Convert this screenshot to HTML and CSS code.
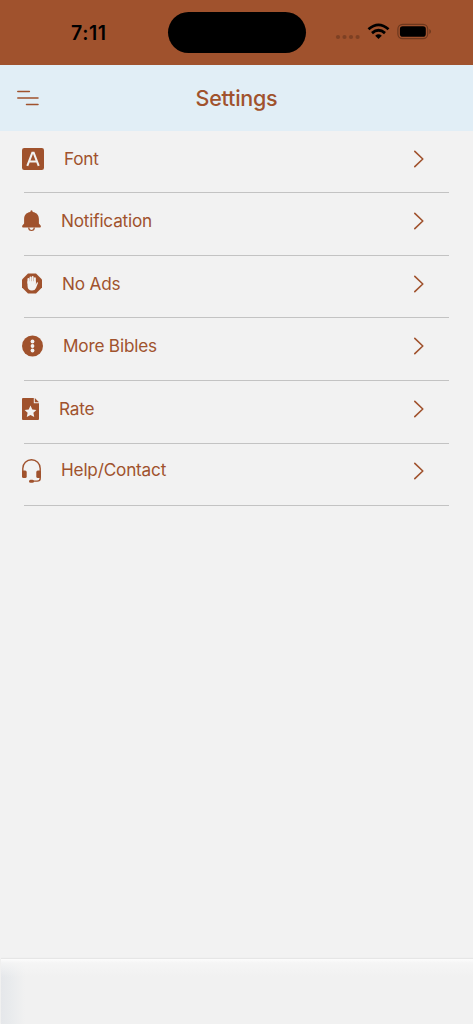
FILE: index.html
```html
<!DOCTYPE html>
<html lang="en">
<head>
<meta charset="utf-8">
<title>Settings</title>
<link rel="stylesheet" href="styles.css">
</head>
<body>
<div class="app">
  <div class="status">
    <span class="time">7:11</span>
    <div class="island"></div>
    <svg class="indicators" width="98" height="20" viewBox="0 0 98 20">
      <g fill="#7e4023"><circle cx="3" cy="15" r="2.1"/><circle cx="9.5" cy="15" r="2.1"/><circle cx="16" cy="15" r="2.1"/><circle cx="22.6" cy="15" r="2.1"/></g>
      <g fill="none" stroke="#000" stroke-width="2.8"><path d="M33.5 7.2Q43.5-1.5 53.5 7.2"/><path d="M37 11.1Q43.5 5.4 50 11.1"/></g>
      <path d="M40.2 13.7q3.3-2.8 6.6 0L43.5 17z"/>
      <rect x="62.9" y="2.3" width="29.8" height="14.4" rx="4.6" fill="none" stroke="#6e381e" stroke-width="1.2"/>
      <rect x="64.9" y="4.3" width="25.9" height="10.4" rx="2.8"/>
      <path d="M94.3 7q1.7.7 1.7 2.5t-1.7 2.5z" fill="#6e381e"/>
    </svg>
  </div>
  <header class="header">
    <svg class="menu" width="22" height="16" viewBox="0 0 22 16"><path d="M.8 1.5h11.6M.8 8h20.2M9.5 14.5h11.5" stroke="#a0522d" stroke-width="1.5" stroke-linecap="round"/></svg>
    <h1 class="title">Settings</h1>
  </header>
  <main class="list">
    <div class="row">
      <svg class="icon" width="22" height="22" viewBox="0 0 22 22"><rect width="22" height="22" rx="2.2"/><path d="M5.3 17.8 10.3 4.8h1.4l5 13M7.2 13.4h7.6" fill="none" stroke="#f2f2f2" stroke-width="2"/></svg>
      <span class="label">Font</span>
      <svg class="chevron" viewBox="0 0 12 18"><path d="m1.8 1.4 8 7.6-8 7.6"/></svg>
    </div>
    <div class="row">
      <svg class="icon" width="19" height="22" viewBox="0 0 19 22"><path d="M9.5.3q1.2 0 1.2 1.7c4.4.7 6.2 3.5 6.2 7v4.5l1.9 2.2q.3 1.8-.8 1.8H1q-1.1 0-.8-1.8l1.9-2.2V9c0-3.5 1.8-6.3 6.2-7q0-1.7 1.2-1.7z"/><path d="M6.7 17.5q0 3 2.8 3t2.8-3" fill="none" stroke="#a0522d" stroke-width="1.2"/></svg>
      <span class="label">Notification</span>
      <svg class="chevron" viewBox="0 0 12 18"><path d="m1.8 1.4 8 7.6-8 7.6"/></svg>
    </div>
    <div class="row">
      <svg class="icon" width="20" height="21" viewBox="0 0 20 21"><path d="M6 .5h8l6 6v8l-6 6H6l-6-6v-8z"/><path d="M6.4 10V6M8.5 9V4.5M10.7 9V4M12.9 10V5.2" stroke="#f2f2f2" stroke-width="1.9" stroke-linecap="round"/><path d="M5.5 8.3h8.3v3.4l1-2.1q1.2-.8 1.2.4l-2 5q-1 2.5-4 2.5-4.5 0-4.5-5z" fill="#f2f2f2"/></svg>
      <span class="label">No Ads</span>
      <svg class="chevron" viewBox="0 0 12 18"><path d="m1.8 1.4 8 7.6-8 7.6"/></svg>
    </div>
    <div class="row">
      <svg class="icon" width="21" height="22" viewBox="0 0 21 22"><circle cx="10.5" cy="11" r="10.5"/><g fill="#f2f2f2"><circle cx="10.5" cy="6.5" r="1.9"/><circle cx="10.5" cy="11" r="1.9"/><circle cx="10.5" cy="15.5" r="1.9"/></g></svg>
      <span class="label">More Bibles</span>
      <svg class="chevron" viewBox="0 0 12 18"><path d="m1.8 1.4 8 7.6-8 7.6"/></svg>
    </div>
    <div class="row">
      <svg class="icon" width="17" height="22" viewBox="0 0 17 22"><path d="M1 0h10.8v5.2H17V21q0 1-1 1H1q-1 0-1-1V1q0-1 1-1z"/><path d="M12.8 0v4.2H17z"/><path d="m8.5 7.5 1.8 3.9 4.1.5-3 2.9.8 4.2-3.7-2.1L4.8 19l.8-4.2-3-2.9 4.1-.5z" fill="#f2f2f2"/></svg>
      <span class="label">Rate</span>
      <svg class="chevron" viewBox="0 0 12 18"><path d="m1.8 1.4 8 7.6-8 7.6"/></svg>
    </div>
    <div class="row">
      <svg class="icon" width="19" height="24" viewBox="0 0 19 24"><path d="M.8 14V9.5a8.7 8.7 0 0 1 17.4 0v10q0 2.6-3 2.6H10" fill="none" stroke="#a0522d" stroke-width="1.4"/><rect y="11.5" width="4.7" height="7.5" rx="1.5"/><rect x="14.3" y="11.5" width="4.7" height="7.5" rx="1.5"/><rect x="7" y="20.7" width="5" height="3" rx="1.5"/></svg>
      <span class="label help">Help/Contact</span>
      <svg class="chevron" viewBox="0 0 12 18"><path d="m1.8 1.4 8 7.6-8 7.6"/></svg>
    </div>
  </main>
  <footer class="footer"></footer>
</div>
</body>
</html>
```
FILE: styles.css
```css
body { margin: 0; }
.app {
  display: flex;
  flex-direction: column;
  width: 473px;
  height: 1024px;
  overflow: hidden;
  background: #f2f2f2;
  color: #a0522d;
  font-family: Inter, "Liberation Sans", sans-serif;
}
.status {
  display: grid;
  grid-template-columns: 167.5px 138px 1fr;
  align-items: center;
  height: 65px;
  background: #a0522d;
}
.time {
  padding-left: 71px;
  color: #000;
  font-size: 19.5px;
  font-weight: 600;
  line-height: 24px;
  letter-spacing: 0.6px;
}
.island { height: 41px; border-radius: 21px; background: #000; }
.indicators { margin: 0 0 2px 29.5px; }
.header {
  display: grid;
  grid-template-columns: 60px 1fr 60px;
  align-items: center;
  height: 66px;
  background: #e1eef6;
}
.menu { margin-left: 17px; }
.title {
  margin: 0;
  font-size: 21.5px;
  font-weight: 500;
  line-height: 28px;
  letter-spacing: -0.25px;
  text-align: center;
}
.list { padding: 0 24px; margin-top: -0.3px; }
.row {
  display: flex;
  align-items: center;
  box-sizing: border-box;
  height: 62.6px;
  padding-bottom: 6px;
  border-bottom: 1px solid #c3c3c3;
}
.icon { flex: none; margin-left: -2px; fill: #a0522d; }
.label {
  margin-left: 20px;
  font-size: 17.2px;
  line-height: 24px;
  letter-spacing: -0.2px;
  white-space: nowrap;
}
.help { padding-bottom: 2px; }
.chevron {
  width: 12px;
  height: 18px;
  margin-left: auto;
  margin-right: 24px;
  fill: none;
  stroke: #a0522d;
  stroke-width: 1.6;
  stroke-linecap: round;
  stroke-linejoin: round;
}
.footer {
  height: 65px;
  margin-top: auto;
  margin-left: 1px;
  background:
    linear-gradient(to bottom, #fcfcfc 0, rgba(246, 246, 246, 0.8) 4px, rgba(242, 242, 242, 0) 18px),
    linear-gradient(to right, #e5e7ea 0, #e9ebed 10px, #f1f1f1 24px);
  box-shadow: 0 -1px 1px #e6e6e6;
}
```
